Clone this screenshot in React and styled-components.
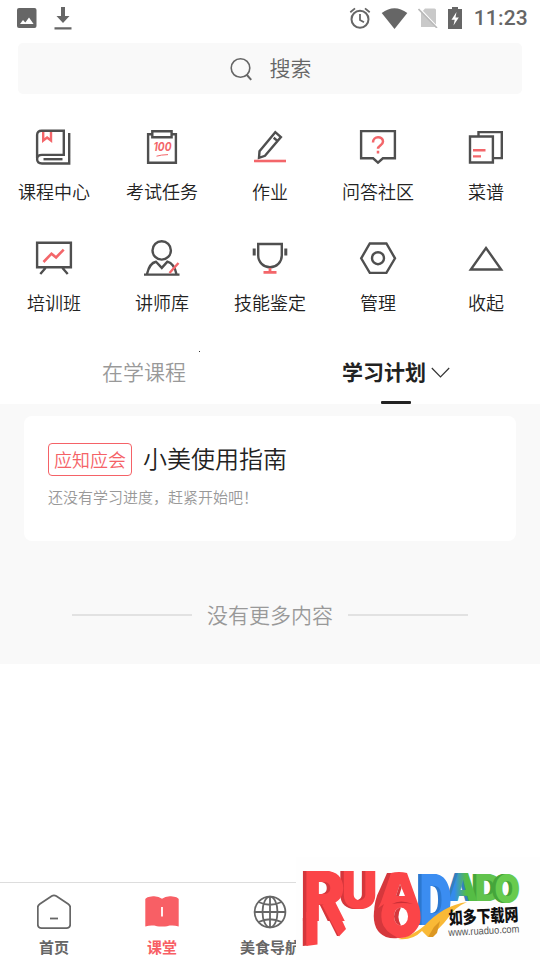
import React from "react";
import styled, { createGlobalStyle } from "styled-components";

const GlobalStyle = createGlobalStyle`
    * {
        box-sizing: border-box;
    }
    body {
        margin: 0;
        background: #fff;
        font-family: "Noto Sans CJK SC", "Noto Sans", sans-serif;
        font-weight: 350;
    }
    svg {
        display: block;
        flex-shrink: 0;
    }
`;

const Screen = styled.div`
    position: relative;
    width: 540px;
    height: 960px;
    display: flex;
    flex-direction: column;
    background: #fff;
    overflow: hidden;
`;

const StatusBar = styled.header`
    height: 43px;
    padding: 0 12px 7px 16px;
    display: flex;
    align-items: center;
    justify-content: space-between;
`;

const StatusGroup = styled.div`
    display: flex;
    align-items: center;
    gap: ${(props) => props.$gap}px;
`;

const Clock = styled.span`
    margin-left: 2px;
    font-family: Roboto, sans-serif;
    font-size: 21px;
    font-weight: 500;
    line-height: 36px;
    letter-spacing: 0.2px;
    color: #666;
`;

const SearchBox = styled.div`
    height: 51px;
    margin: 0 18px;
    border-radius: 5px;
    background: #f9f9f9;
    display: flex;
    align-items: center;
    justify-content: center;
    gap: 17px;
    font-size: 21px;
    line-height: 30px;
    color: #666;
`;

const SearchText = styled.span`
    padding-bottom: 3px;
`;

const MenuGrid = styled.div`
    display: grid;
    grid-template-columns: repeat(5, 108px);
    grid-auto-rows: 111px;
    padding-top: 34px;
`;

const MenuItem = styled.div`
    display: flex;
    flex-direction: column;
    align-items: center;
    gap: 12px;
    font-size: 18px;
    line-height: 26px;
    color: #222;
`;

const Tabs = styled.div`
    height: 54px;
    padding: 0 18px;
    display: flex;
`;

const Tab = styled.div`
    position: relative;
    width: 252px;
    padding-top: 6px;
    display: flex;
    justify-content: center;
    align-items: flex-start;
    font-size: 21px;
    line-height: 30px;
    font-weight: ${(props) => (props.$active ? 700 : 350)};
    color: ${(props) => (props.$active ? "#222" : "#999")};

    ${(props) => props.$active && `
        &::after {
            content: "";
            position: absolute;
            left: 111px;
            bottom: 0;
            width: 30px;
            height: 3px;
            border-radius: 1px;
            background: #222;
        }
    `}
`;

const TabArrow = styled.span`
    padding: 11px 0 0 5px;
`;

const TabLabel = styled.span`
    white-space: nowrap;
`;

/* stray speck above the first tab */
const Speck = styled.i`
    position: absolute;
    left: 199px;
    top: 351px;
    width: 1px;
    height: 1px;
    background: #333;
`;

const Content = styled.main`
    height: 260px;
    padding: 12px 24px 0;
    background: #f9f9f9;
`;

const Card = styled.section`
    height: 125px;
    padding: 26px 24px 0;
    border-radius: 8px;
    background: #fff;
`;

const CardHead = styled.div`
    display: flex;
    align-items: flex-start;
    gap: 11px;
`;

const Tag = styled.span`
    height: 33px;
    margin-top: 1px;
    padding: 0 5px;
    border: 1px solid #f56267;
    border-radius: 4px;
    font-size: 18px;
    line-height: 31px;
    color: #f56267;
`;

const CardTitle = styled.h2`
    margin: 0;
    font-size: 24px;
    font-weight: 350;
    line-height: 31px;
    color: #222;
`;

const CardNote = styled.p`
    margin: 10px 0 0;
    font-size: 15px;
    line-height: 22px;
    color: #999;
`;

const EndLine = styled.div`
    margin-top: 59px;
    display: flex;
    align-items: center;
    justify-content: center;
    gap: 15px;
    font-size: 21px;
    line-height: 28px;
    color: #999;

    &::before,
    &::after {
        content: "";
        width: 120px;
        height: 2px;
        margin-top: 1px;
        background: #e2e2e2;
    }
`;

const NavBar = styled.nav`
    height: 78px;
    margin-top: auto;
    padding-top: 11px;
    border-top: 1px solid #ddd;
    display: flex;
`;

const NavItem = styled.div`
    width: 108px;
    display: flex;
    flex-direction: column;
    align-items: center;
    gap: 6px;
    font-size: 15px;
    font-weight: 700;
    line-height: 22px;
    color: ${(props) => (props.$active ? "#f85f65" : "#666")};
`;

const Watermark = styled.div`
    position: absolute;
    right: 0;
    bottom: 0;
    background: #fefefe;

    svg {
        overflow: visible;
    }
`;

const DARK = "#4f4f4f";
const RED = "#f3666a";

const Icon = ({ children }) => (
    <svg width="38" height="38" viewBox="0 0 38 38" fill="none" stroke={DARK} strokeWidth="2.4">
        {children}
    </svg>
);

const icons = {
    course: (
        <Icon>
            <path d="M2.1 30V7q0-4.300 4.500-4.300H28.800v24.200H7q-4.900 0-4.900 4.100 0 4.500 4.900 4.500h27.200V5" />
            <path d="M8.500 31.200H27.500" />
            <path d="M8.200 4v8.500l3.900-3 3.900 3V4" stroke={RED} />
        </Icon>
    ),
    exam: (
        <Icon>
            <path d="M9.5 6.200H5.100v28.500h27.800V6.200h-4.400" />
            <path d="M9.300 3.200h19.300v6H9.300z" />
            <text x="19.5" y="23.2" fill={RED} stroke="none" textAnchor="middle" fontFamily="Inter, sans-serif" fontSize="11.5" fontWeight="700" fontStyle="italic" textLength="18" lengthAdjust="spacingAndGlyphs">100</text>
            <path d="M13.500 28.200Q18 26.800 25 26.600" stroke={RED} strokeWidth="1" />
        </Icon>
    ),
    homework: (
        <Icon>
            <path d="m8 29.800.500-6.600L24.300 4.200l5.600 4.900L14 27.800zM22.700 9.800l4 3.300" />
            <path d="M3 33h32" stroke={RED} strokeWidth="2.600" />
        </Icon>
    ),
    question: (
        <Icon>
            <path d="M2.100 3.100h33.800v27.200h-12L19 34.600l-4.900-4.300h-12z" />
            <path d="M14 14.500c0-7 10-6.500 10-1 0 4-5 4-5 7.200M19 22.800v2.600" stroke={RED} strokeWidth="2.500" />
        </Icon>
    ),
    recipe: (
        <Icon>
            <path d="M11.500 8V4.100h23.300v26H27" />
            <path d="M3 8.500h22.900v26H3z" />
            <path d="M6 22.200h12.500M6 28.400h8" stroke={RED} />
        </Icon>
    ),
    training: (
        <Icon>
            <path d="M2.100 3.700h33.800v24.500H2.100zM10.500 29l-5.200 6M27.500 29l5.200 6" />
            <path d="m8.500 23 8-8.300 4.600 3.700 7.600-7.800" stroke={RED} strokeWidth="2.600" />
        </Icon>
    ),
    teacher: (
        <Icon>
            <circle cx="18.700" cy="11.400" r="9.200" />
            <path d="M1 35.600h35.500M4 35q2.500-11 9-12.300l5.800 6.200 5.600-6.200q6.600 1.700 9 12.300" />
            <path d="m26.500 34 9-10" stroke={RED} />
        </Icon>
    ),
    skill: (
        <Icon>
            <path d="M7.200 5h23.600v11.500a11.800 11.800 0 0 1-23.600 0z" />
            <path d="M3.200 9.600v7M34.800 9.600v7" strokeWidth="3" />
            <path d="M19 29v4M12.500 33.400h13" stroke={RED} strokeWidth="2.800" />
        </Icon>
    ),
    manage: (
        <Icon>
            <path d="M10.800 4.500h16.600L36 19.300l-8.600 14.600H10.800L2.200 19.300z" />
            <circle cx="19" cy="19.200" r="6" />
        </Icon>
    ),
    collapse: (
        <Icon>
            <path d="M19 9 34.200 30.500H3.800z" />
        </Icon>
    ),
};

const menu = [
    { icon: "course", label: "课程中心" },
    { icon: "exam", label: "考试任务" },
    { icon: "homework", label: "作业" },
    { icon: "question", label: "问答社区" },
    { icon: "recipe", label: "菜谱" },
    { icon: "training", label: "培训班" },
    { icon: "teacher", label: "讲师库" },
    { icon: "skill", label: "技能鉴定" },
    { icon: "manage", label: "管理" },
    { icon: "collapse", label: "收起" },
];

const PhotoIcon = () => (
    <svg width="21" height="20" viewBox="0 0 21 20">
        <rect x="1" width="19.500" height="20" rx="2" fill="#666" />
        <path d="m4 16 3-4 2.300 2.600L13 9.500l4.600 6.500z" fill="#fff" />
    </svg>
);

const DownloadIcon = () => (
    <svg width="18" height="24" viewBox="0 0 18 24" fill="#666">
        <path d="M7 1h4v9h4.500L9 17 2.500 10H7zM.5 21.200h17v2.300H.5z" />
    </svg>
);

const AlarmIcon = () => (
    <svg width="22" height="22" viewBox="0 0 22 22" fill="none" stroke="#666" strokeWidth="2">
        <circle cx="11" cy="12.200" r="8.500" />
        <path d="M11 7v6l4 2.300M1.300 5.200 6 1.400M20.700 5.200 16 1.400" strokeWidth="1.800" />
    </svg>
);

const WifiIcon = () => (
    <svg width="27" height="21" viewBox="0 0 27 21">
        <path d="M.7 5Q13.500-4.600 26.300 5L13.500 21z" fill="#666" />
    </svg>
);

const NoSimIcon = () => (
    <svg width="20" height="20" viewBox="0 0 20 20">
        <path d="M7 .5h9.500q1.500 0 1.500 1.500v17H3V5z" fill="#c9c9c9" />
        <path d="m2 1.300 17 18" stroke="#fff" strokeWidth="2" />
        <path d="m.5 1 18.500 19" stroke="#b8b8b8" strokeWidth="1.600" />
    </svg>
);

const BatteryIcon = () => (
    <svg width="14" height="22" viewBox="0 0 14 22">
        <path d="M4 0h6v2h4v20H0V2h4z" fill="#666" />
        <path d="M8.500 5 3.500 12.800h3.200L5.500 18.500 10.800 10.500H7.500z" fill="#fff" />
    </svg>
);

const SearchIcon = () => (
    <svg width="24" height="24" viewBox="0 0 24 24" fill="none" stroke="#666" strokeWidth="1.600">
        <circle cx="11.500" cy="11" r="9.300" />
        <path d="m17.500 17.500 4.700 5.400" strokeWidth="2" />
    </svg>
);

const HomeIcon = () => (
    <svg width="34" height="36" viewBox="0 0 34 36" fill="none" stroke="#666" strokeWidth="1.800" strokeLinejoin="round">
        <path d="M14.800 2.100q2.200-1.400 4.400 0l12 7.800q2 1.300 2 3.400v17q0 3.800-3.800 3.800H4.600q-3.800 0-3.800-3.800v-17q0-2.100 2-3.400z" />
        <path d="M13 24.500h8" />
    </svg>
);

const BookIcon = () => (
    <svg width="34" height="36" viewBox="0 0 34 36">
        <path d="M.3 5Q1 3 8 2.200q5.500-.400 9 2.600 3.500-3 9-2.600 7 .800 7.700 2.800V32.500q-5-1.600-9-.900-3 .900-4.700.900h-6q-1.700 0-4.700-.900-4-.700-9 .900z" fill="#f85f65" />
        <path d="M17 13v9.500" stroke="#fff" strokeWidth="1.800" />
    </svg>
);

const GlobeIcon = () => (
    <svg width="34" height="36" viewBox="0 0 34 36" fill="none" stroke="#666" strokeWidth="1.800">
        <circle cx="17" cy="18" r="15.400" />
        <ellipse cx="17" cy="18" rx="7.500" ry="15.400" />
        <path d="M1.600 18h30.800M17 2.600v30.800M5.500 8q11.500 5.500 23 0M5.500 28q11.500-5.500 23 0" />
    </svg>
);

/* one logo letter: a dark extruded side below a bright face */
const LogoLetter = ({ x, y, sx, sy, face, side, children }) => {
    const place = (dx) => `translate(${x + dx} ${y}) scale(${sx} ${sy})`;
    return (
        <g fontFamily="Inter, sans-serif" fontSize="50" fontWeight="900">
            {[0, 1, 2].map((dx) => (
                <text key={dx} transform={place(dx)} fill={side}>{children}</text>
            ))}
            <text transform={place(3.5)} fill={face}>{children}</text>
        </g>
    );
};

const SiteLogo = () => (
    <svg width="244" height="103" viewBox="296 857 244 103">
        <defs>
            <linearGradient id="blend" x1="0" x2="1">
                <stop offset="0.2" stopColor="#348cec" />
                <stop offset="0.6" stopColor="#55bd45" />
            </linearGradient>
        </defs>
        <LogoLetter x={471} y={901} sx={0.78} sy={0.74} face="#61c34c" side="#45a53b">D</LogoLetter>
        <LogoLetter x={491} y={903} sx={0.66} sy={0.8} face="#68cb4e" side="#45a53b">O</LogoLetter>
        <LogoLetter x={445} y={901} sx={0.74} sy={0.78} face="url(#blend)" side="#3280bd">A</LogoLetter>
        <LogoLetter x={416} y={925} sx={0.9} sy={1.4} face="#3b8df1" side="#2c78d0">D</LogoLetter>
        <path d="M398 939q16-4 26-13 20-21 43-24-12 5-19 16-8 11-20 19l-6-6q-10 10-24 8z" fill="#f9b936" />
        <path d="m434 927 6-6-3 12-4 4-5 0z" fill="#dc9722" />
        <LogoLetter x={338} y={908} sx={1} sy={1.02} face="#fb4548" side="#d5373c">U</LogoLetter>
        <LogoLetter x={300} y={921} sx={1.26} sy={1.38} face="#fb4548" side="#d5373c">R</LogoLetter>
        {/* long stem and leg below the first letter */}
        <path d="M302.800 918h5v27.500l-5 .500z" fill="#d5373c" />
        <path d="M306.300 912h11.200v32.500l-11.200 1.500z" fill="#fb4548" />
        <path d="m327 916 8 4 4 16-2 0z" fill="#d5373c" />
        <path d="m322 905 12-2 12 26-7 7.500z" fill="#fb4548" />
        <path d="M387 873h8l-4 32-17 9q0-14 6-25z" fill="#d5373c" />
        <path d="M391 873q8-2 16 0l10 28q5 11 3 22-7 16-22 15-18-2-22-18 0-9 5-18z" fill="#fb4548" />
        <path d="M374 911q-2 20 12 26 6 2 12 1-14-7-16-16-2-10 2-18z" fill="#d5373c" />
        <path d="m400 884-4 12h9z" fill="#fff" />
        <path d="m400 884-4 12h3l2.500-8z" fill="#d5373c" />
        <path d="M392 904q8-5 21 0-10-2-21 0z" fill="#c92f36" />
        <ellipse cx="401" cy="916.500" rx="7" ry="9" fill="#fff" />
        <path d="M401 907.500a7 9 0 0 0 0 18q-5-9 0-18z" fill="#d5373c" />
        <g transform="rotate(-3 449 926)">
            <text x="449" y="924.5" fontFamily="Noto Sans CJK SC, sans-serif" fontSize="17.5" fontWeight="900" textLength="70" lengthAdjust="spacingAndGlyphs" fill="#111">如多下载网</text>
            <text x="448" y="936" fontFamily="Liberation Sans, sans-serif" fontSize="10.5" textLength="71" lengthAdjust="spacingAndGlyphs" fill="#555">www.ruaduo.com</text>
        </g>
    </svg>
);

const App = () => (
    <>
        <GlobalStyle />
        <Screen>
            <StatusBar>
                <StatusGroup $gap={17}>
                    <PhotoIcon />
                    <DownloadIcon />
                </StatusGroup>
                <StatusGroup $gap={10}>
                    <AlarmIcon />
                    <WifiIcon />
                    <NoSimIcon />
                    <BatteryIcon />
                    <Clock>11:23</Clock>
                </StatusGroup>
            </StatusBar>
            <SearchBox>
                <SearchIcon />
                <SearchText>搜索</SearchText>
            </SearchBox>
            <MenuGrid>
                {menu.map((item) => (
                    <MenuItem key={item.icon}>
                        {icons[item.icon]}
                        <span>{item.label}</span>
                    </MenuItem>
                ))}
            </MenuGrid>
            <Speck />
            <Tabs>
                <Tab><TabLabel>在学课程</TabLabel></Tab>
                <Tab $active>
                    <TabLabel>学习计划</TabLabel>
                    <TabArrow>
                        <svg width="19" height="12" viewBox="0 0 19 12" fill="none" stroke="#333" strokeWidth="1.2">
                            <path d="m.8 1 8.700 9 8.700-9" />
                        </svg>
                    </TabArrow>
                </Tab>
            </Tabs>
            <Content>
                <Card>
                    <CardHead>
                        <Tag>应知应会</Tag>
                        <CardTitle>小美使用指南</CardTitle>
                    </CardHead>
                    <CardNote>还没有学习进度，赶紧开始吧！</CardNote>
                </Card>
                <EndLine>没有更多内容</EndLine>
            </Content>
            <NavBar>
                <NavItem><HomeIcon />首页</NavItem>
                <NavItem $active><BookIcon />课堂</NavItem>
                <NavItem><GlobeIcon />美食导航</NavItem>
            </NavBar>
            <Watermark>
                <SiteLogo />
            </Watermark>
        </Screen>
    </>
);

export default App;
